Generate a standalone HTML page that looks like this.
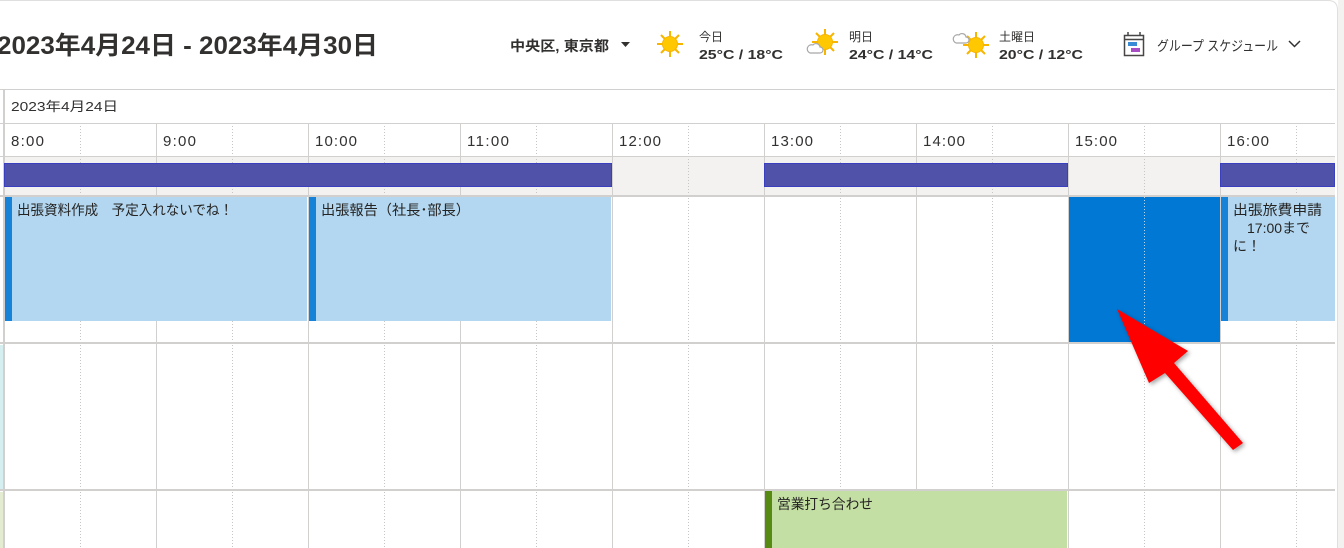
<!DOCTYPE html>
<html><head><meta charset="utf-8">
<style>
html,body{margin:0;padding:0;background:#fff;}
body{width:1344px;height:548px;overflow:hidden;position:relative;font-family:"Liberation Sans","Noto Sans CJK JP",sans-serif;}
svg{position:absolute;left:0;top:0;}
text{font-family:"Liberation Sans","Noto Sans CJK JP",sans-serif;}
</style></head><body>
<svg width="1344" height="548" viewBox="0 0 1344 548" xmlns="http://www.w3.org/2000/svg">
<rect x="1338" y="0" width="6" height="548" fill="#f3f2f1"/>
<path d="M0 0.5 H1328 Q1337.5 0.5 1337.5 10 V548" fill="none" stroke="#e1dfdd"/>
<text x="-3" y="54" font-size="25" font-weight="bold" fill="#323130" textLength="381" lengthAdjust="spacingAndGlyphs">2023年4月24日 - 2023年4月30日</text>
<text x="510" y="51" font-size="14" font-weight="bold" fill="#323130" textLength="99" lengthAdjust="spacingAndGlyphs">中央区, 東京都</text>
<path d="M621 42 h9 l-4.5 5 z" fill="#323130"/>
<defs>
<g id="sun">
<g stroke="#f7b500" stroke-width="2">
<line x1="0" y1="-13" x2="0" y2="13"/><line x1="-13" y1="0" x2="13" y2="0"/>
<line x1="-9" y1="-9" x2="9" y2="9"/><line x1="-9" y1="9" x2="9" y2="-9"/>
</g>
<circle r="7.5" fill="#ffc800" stroke="#f7b500"/>
</g>
<g id="cloud"><path d="M-6 4 h10 a3 3 0 0 0 0-6 a4 4 0 0 0-7-2 a3 3 0 0 0-3 8z" fill="#fff" stroke="#a8a8a8" stroke-width="1.2"/></g>
</defs>
<use href="#sun" x="670" y="44"/>
<text x="699" y="41" font-size="12" fill="#323130">今日</text>
<text x="699" y="59" font-size="13" font-weight="bold" fill="#323130" textLength="84" lengthAdjust="spacingAndGlyphs">25°C / 18°C</text>
<use href="#sun" x="825" y="42"/>
<use href="#cloud" x="816" y="49"/>
<text x="849" y="41" font-size="12" fill="#323130">明日</text>
<text x="849" y="59" font-size="13" font-weight="bold" fill="#323130" textLength="84" lengthAdjust="spacingAndGlyphs">24°C / 14°C</text>
<use href="#sun" x="976" y="45"/>
<use href="#cloud" x="962" y="39"/>
<text x="999" y="41" font-size="12" fill="#323130">土曜日</text>
<text x="999" y="59" font-size="13" font-weight="bold" fill="#323130" textLength="84" lengthAdjust="spacingAndGlyphs">20°C / 12°C</text>
<rect x="1124.5" y="35.5" width="19" height="20" fill="#fff" stroke="#484644" stroke-width="1.5"/>
<line x1="1124" y1="39.5" x2="1144" y2="39.5" stroke="#484644" stroke-width="1.5"/>
<line x1="1128" y1="32" x2="1128" y2="36" stroke="#484644" stroke-width="1.5"/><line x1="1140" y1="32" x2="1140" y2="36" stroke="#484644" stroke-width="1.5"/>
<rect x="1128" y="42" width="9" height="4" fill="#3a8bd6"/>
<rect x="1131" y="48" width="9" height="4" fill="#a74ec4"/>
<text x="1157" y="51" font-size="14" fill="#323130" textLength="121" lengthAdjust="spacingAndGlyphs">グループ スケジュール</text>
<path d="M1289 41 l5.5 5.5 l5.5 -5.5" fill="none" stroke="#323130" stroke-width="1.5"/>

<rect x="4" y="156" width="1331" height="39" fill="#f3f2f1"/>
<g stroke="#c8c6c4" stroke-width="1" stroke-dasharray="1 2">
<line x1="80.5" y1="123" x2="80.5" y2="548"/><line x1="232.5" y1="123" x2="232.5" y2="548"/>
<line x1="384.5" y1="123" x2="384.5" y2="548"/><line x1="536.5" y1="123" x2="536.5" y2="548"/>
<line x1="688.5" y1="123" x2="688.5" y2="548"/><line x1="840.5" y1="123" x2="840.5" y2="548"/>
<line x1="992.5" y1="123" x2="992.5" y2="548"/><line x1="1144.5" y1="123" x2="1144.5" y2="548"/>
<line x1="1296.5" y1="123" x2="1296.5" y2="548"/>
</g>
<g stroke="#d2d0ce" stroke-width="1">
<line x1="156.5" y1="123" x2="156.5" y2="548"/><line x1="308.5" y1="123" x2="308.5" y2="548"/>
<line x1="460.5" y1="123" x2="460.5" y2="548"/><line x1="612.5" y1="123" x2="612.5" y2="548"/>
<line x1="764.5" y1="123" x2="764.5" y2="548"/><line x1="916.5" y1="123" x2="916.5" y2="548"/>
<line x1="1068.5" y1="123" x2="1068.5" y2="548"/><line x1="1220.5" y1="123" x2="1220.5" y2="548"/>
<line x1="0" y1="89.5" x2="1335" y2="89.5"/><line x1="0" y1="123.5" x2="1335" y2="123.5"/>
<line x1="0" y1="156.5" x2="1335" y2="156.5"/>
</g>
<rect x="3" y="89" width="2" height="459" fill="#d2d0ce"/>
<rect x="0" y="345" width="3" height="144" fill="#d5eef0"/>
<rect x="0" y="492" width="3" height="56" fill="#e3ecd0"/>
<g fill="#d2d0ce">
<rect x="0" y="195" width="1335" height="2"/>
<rect x="0" y="342" width="1335" height="2"/>
<rect x="0" y="489" width="1335" height="2"/>
</g>
<text x="11" y="111" font-size="13" fill="#323130" textLength="107" lengthAdjust="spacingAndGlyphs">2023年4月24日</text>
<g font-size="15" fill="#323130">
<text x="11" y="146" textLength="33">8:00</text><text x="163" y="146" textLength="33">9:00</text><text x="315" y="146" textLength="42">10:00</text>
<text x="467" y="146" textLength="42">11:00</text><text x="619" y="146" textLength="42">12:00</text><text x="771" y="146" textLength="42">13:00</text>
<text x="923" y="146" textLength="42">14:00</text><text x="1075" y="146" textLength="42">15:00</text><text x="1227" y="146" textLength="42">16:00</text>
</g>
<g fill="#4f52a8" stroke="#3a3fc0" stroke-width="1">
<rect x="4.5" y="163.5" width="607" height="23"/>
<rect x="764.5" y="163.5" width="303" height="23"/>
<rect x="1220.5" y="163.5" width="114" height="23"/>
</g>
<rect x="5" y="197" width="302" height="124" fill="#b3d7f0"/>
<rect x="5" y="197" width="7" height="124" fill="#1682d8"/>
<rect x="309" y="197" width="302" height="124" fill="#b3d7f0"/>
<rect x="309" y="197" width="7" height="124" fill="#1682d8"/>
<rect x="1221" y="197" width="114" height="124" fill="#b3d7f0"/>
<rect x="1221" y="197" width="7" height="124" fill="#1682d8"/>
<rect x="1069" y="197" width="151" height="145" fill="#0078d4"/>
<line x1="1144.5" y1="197" x2="1144.5" y2="342" stroke="#fff" stroke-dasharray="1 2" opacity="0.7"/>
<rect x="765" y="491" width="302" height="57" fill="#c4dfa4"/>
<rect x="765" y="491" width="7" height="57" fill="#578a13"/>
<g font-size="14" fill="#252423">
<text x="17" y="215" textLength="216" lengthAdjust="spacingAndGlyphs">出張資料作成　予定入れないでね！</text>
<text x="321" y="215" textLength="149" lengthAdjust="spacingAndGlyphs">出張報告（社長･部長）</text>
<text x="1233" y="215" textLength="89" lengthAdjust="spacingAndGlyphs">出張旅費申請</text>
<text x="1233" y="233">　17:00まで</text>
<text x="1233" y="251">に！</text>
<text x="777" y="509" textLength="96" lengthAdjust="spacingAndGlyphs">営業打ち合わせ</text>
</g>
<polygon points="1117,309 1188,351 1174,363 1243,443 1233,450 1165,373 1149,383" fill="#ff0000" style="filter:drop-shadow(2px 2px 2px rgba(0,0,0,0.35))"/>
</svg>
</body></html>
